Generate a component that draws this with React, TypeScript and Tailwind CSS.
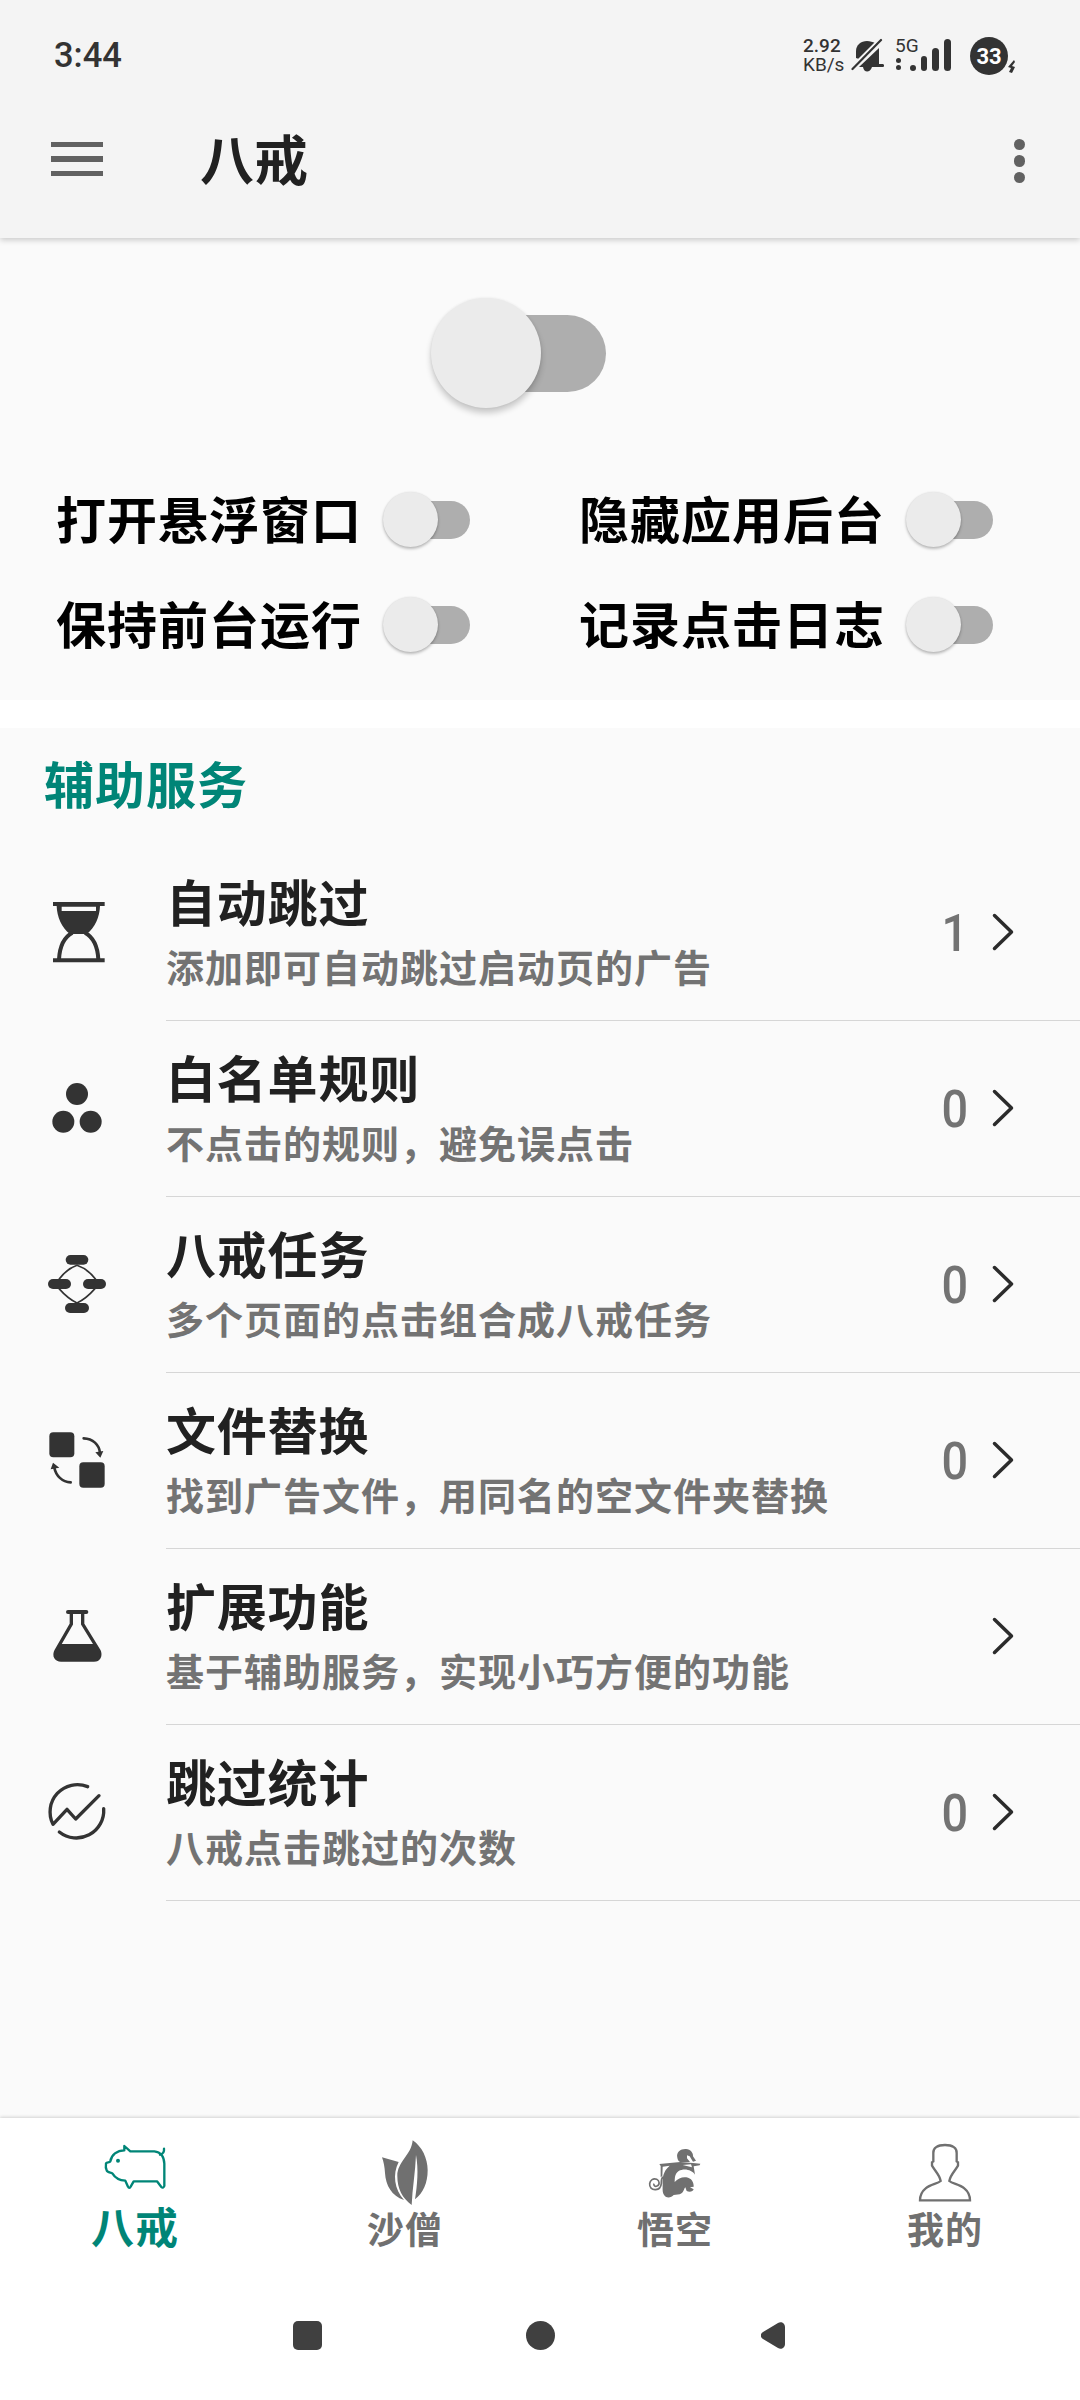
import React, { useState } from 'react';
import clsx from 'clsx';

interface SwitchProps {
  size: 'lg' | 'sm';
  checked: boolean;
  onChange: () => void;
}

const Switch: React.FC<SwitchProps> = ({ size, checked, onChange }) => {
  const large = size === 'lg';

  return (
    <button
      role="switch"
      aria-checked={checked}
      onClick={onChange}
      className={clsx('relative flex items-center', large ? 'w-[175px] h-[110px]' : 'w-[87px] h-[55px]')}
    >
      <span
        className={clsx(
          'ml-auto rounded-full',
          large ? 'w-[155px] h-[77px]' : 'w-[77px] h-[38px]',
          checked ? 'bg-[#80c2bb]' : 'bg-[#aeaeae]'
        )}
      />
      <span
        className={clsx(
          'absolute top-0 rounded-full',
          large
            ? 'size-[110px] shadow-[0_5px_6px_rgba(0,0,0,0.2),0_0_3px_rgba(0,0,0,0.08)]'
            : 'size-[55px] shadow-[0_2px_3px_rgba(0,0,0,0.25),0_0_2px_rgba(0,0,0,0.1)]',
          checked ? 'right-0 bg-[#008577]' : 'left-0 bg-[#ebebeb]'
        )}
      />
    </button>
  );
};

const HourglassIcon = () => (
  <svg viewBox="0 0 192 192" className="size-16" fill="#333">
    <path d="M24 6H179V18H165C164 50 150 84 125 102H75C50 84 36 50 35 18H24ZM50 20V33H153V20Z" fillRule="evenodd" />
    <path d="M42 178C44 140 56 112 82 98M160 178C158 140 146 112 120 98" fill="none" stroke="#333" strokeWidth="12" />
    <path d="M24 174.500H179V187H24Z" />
  </svg>
);

const DotsIcon = () => (
  <svg viewBox="0 0 192 192" className="size-16" fill="#333">
    <circle cx="96" cy="54" r="33" />
    <circle cx="55" cy="137" r="33" />
    <circle cx="137" cy="137" r="33" />
  </svg>
);

const TaskIcon = () => (
  <svg viewBox="0 0 192 192" className="size-16" fill="#333">
    <path
      d="M42 82C58 60 76 47 96 40C116 47 136 60 152 82M42 110C58 128 76 144 96 153C116 144 134 128 150 110"
      fill="none"
      stroke="#333"
      strokeWidth="5"
    />
    <rect x="62" y="9" width="68" height="29" rx="14.500" />
    <rect x="9" y="81" width="69" height="30" rx="15" />
    <rect x="114" y="81" width="69" height="30" rx="15" />
    <rect x="60" y="153" width="72" height="30" rx="15" />
  </svg>
);

const ReplaceIcon = () => (
  <svg viewBox="0 0 192 192" className="size-16" fill="#333">
    <rect x="13" y="13" width="75" height="75" rx="12" />
    <rect x="103" y="103" width="76" height="76" rx="12" />
    <g fill="none" stroke="#333" strokeWidth="8" strokeLinecap="round">
      <path d="M116 31C144 32 162 50 165 74" />
      <path d="M77 163C51 162 33 143 28 119" />
    </g>
    <path d="M151 73L175 69L166 89ZM24 104L17 124L43 119Z" />
  </svg>
);

const FlaskIcon = () => (
  <svg viewBox="0 0 192 192" className="size-16" fill="#333">
    <rect x="63" y="18" width="67" height="12" rx="6" />
    <path
      d="M79 28V60L33 140C25 156 34 168 48 168H147C161 168 169 156 162 140L113 60V28"
      fill="none"
      stroke="#333"
      strokeWidth="10"
    />
    <path d="M44 120H150L164 146C168 162 160 170 147 170H48C34 170 26 162 31 146Z" />
  </svg>
);

const StatsIcon = () => (
  <svg
    viewBox="0 0 192 192"
    className="size-16"
    fill="none"
    stroke="#333"
    strokeWidth="10"
    strokeLinecap="round"
    strokeLinejoin="round"
  >
    <path d="M128 20A82 82 0 0 0 24 133L66 88L92 117L162 47" />
    <path d="M176 86A82 82 0 0 1 43 156" />
  </svg>
);

const PigIcon = () => (
  <svg
    viewBox="0 0 192 192"
    className="size-16"
    fill="none"
    stroke="currentColor"
    strokeWidth="7"
    strokeLinejoin="round"
    strokeLinecap="round"
  >
    <path d="M64 21L82 37H154C172 39 183 51 184 74V141C182 147 178 147 175 144L162 127H92L83 143C81 148 77 148 75 143L67 125C50 124 36 116 28 103C24 100 13 101 11 94C8 88 8 80 9 73C12 68 19 72 22 67C25 48 42 34 64 34Z" />
    <path d="M171 47C180 45 184 38 183 29" />
    <circle cx="45" cy="65" r="6" fill="currentColor" stroke="none" />
  </svg>
);

const LeafIcon = () => (
  <svg viewBox="0 0 192 192" className="size-16 overflow-visible" fill="currentColor">
    <path d="M119 4C147 23 164 58 164 94C164 132 150 163 126 181C133 138 137 92 129 48C127 100 118 150 116 198C88 177 73 150 73 111C73 68 115 49 119 4Z" />
    <path d="M27 55L77 69C58 106 64 150 93 183C56 171 38 139 36 102C35 84 32 68 27 55Z" />
  </svg>
);

const MonkeyIcon = () => (
  <svg viewBox="0 0 192 192" className="size-16" fill="currentColor">
    <path d="M103 56C99 38 114 29 129 30C143 31 151 42 150 52L159 65L150 68L140 52L132 49V58L141 69H112C107 67 104 62 103 56Z" />
    <path d="M49 75L112 69L150 72L172 74L170 79L152 82L156 107C148 93 124 86 107 96C94 106 96 117 95 129C105 118 118 113 130 115C145 117 153 130 152 143L141 145L152 151C150 159 138 160 131 156L127 145C121 151 124 161 110 166L92 168C86 174 77 178 68 173C57 166 59 151 59 136C58 116 60 97 80 80L59 83L58 112L53 114L53 81ZM119 78L147 85L144 76Z" />
    <path
      d="M60 114C54 119 55 127 55 133C54 144 48 151 38 152C26 153 19 145 20 134C21 123 31 117 41 121C50 125 51 138 42 141C36 144 31 139 33 134"
      fill="none"
      stroke="currentColor"
      strokeWidth="5"
    />
  </svg>
);

const PersonIcon = () => (
  <svg viewBox="0 0 192 192" className="size-16" fill="none" stroke="currentColor" strokeWidth="7">
    <path d="M96 18C73 18 60 27 61 42V67L57 70V80C66 96 80 107 83 126C74 134 52 136 38 148C27 157 21 169 21 184H171C171 169 165 157 154 148C140 136 118 134 109 126C112 107 126 96 135 80V70L131 67V42C132 27 119 18 96 18Z" />
  </svg>
);

const services = [
  { title: '自动跳过', desc: '添加即可自动跳过启动页的广告', count: '1', icon: <HourglassIcon /> },
  { title: '白名单规则', desc: '不点击的规则，避免误点击', count: '0', icon: <DotsIcon /> },
  { title: '八戒任务', desc: '多个页面的点击组合成八戒任务', count: '0', icon: <TaskIcon /> },
  { title: '文件替换', desc: '找到广告文件，用同名的空文件夹替换', count: '0', icon: <ReplaceIcon /> },
  { title: '扩展功能', desc: '基于辅助服务，实现小巧方便的功能', icon: <FlaskIcon /> },
  { title: '跳过统计', desc: '八戒点击跳过的次数', count: '0', icon: <StatsIcon /> },
];

const tabs = [
  { label: '八戒', icon: <PigIcon /> },
  { label: '沙僧', icon: <LeafIcon /> },
  { label: '悟空', icon: <MonkeyIcon /> },
  { label: '我的', icon: <PersonIcon /> },
];

const options = ['打开悬浮窗口', '隐藏应用后台', '保持前台运行', '记录点击日志'];

const StatusBar = () => (
  <div className="flex h-[110px] items-start pl-[54px] pr-[64px] text-[#333] font-['Roboto',sans-serif]">
    <span className="mt-[34px] text-[34.500px] leading-[42px] font-medium">3:44</span>
    <div className="ml-auto mt-[36px] flex items-start">
      <div className="w-[48px] text-[19px] leading-[19px] font-medium">
        <div>2.92</div>
        <div className="font-normal">KB/s</div>
      </div>
      <svg viewBox="0 0 33 36" className="mt-[2px] h-9 w-[33px]" fill="#333">
        <path d="M5 20V13C5 7 10 3 16 3C19 3 22 4 24 5L8 21Z" />
        <path d="M28 10V26H32C34 27 33 29 32 29H21C19 35 13 35 12 29H8Z" />
        <path d="M1.500 31L30 2" stroke="#333" strokeWidth="2.200" strokeLinecap="round" />
        <path d="M5 24L26 3" stroke="#f4f4f4" strokeWidth="1.500" />
      </svg>
      <div className="ml-[11px] flex">
        <div className="w-[24px]">
          <div className="text-[19px] leading-[20px]">5G</div>
          <div className="flex flex-col gap-[2px] pt-[2px] pl-px">
            <span className="size-[5px] rounded-full bg-[#333]" />
            <span className="size-[5px] rounded-full bg-[#333]" />
          </div>
        </div>
        <div className="-ml-[9px] flex h-[35px] items-end gap-[5px]">
          <span className="size-[6px] rounded-full bg-[#333]" />
          <span className="h-[15px] w-[6px] rounded-full bg-[#333]" />
          <span className="h-[23px] w-[7px] rounded-full bg-[#333]" />
          <span className="h-[32px] w-[7px] rounded-full bg-[#333]" />
        </div>
      </div>
      <span className="ml-[19px] mt-px flex size-[38px] items-center justify-center rounded-full bg-[#333] text-[22px] font-bold text-white">
        33
      </span>
      <svg viewBox="0 0 8 14" className="mt-[24px] h-[14px] w-2" fill="#333">
        <path d="M6 0L0 7L3 8L1 12L4 13L7 7L4 6L7 2Z" />
      </svg>
    </div>
  </div>
);

export default function App() {
  const [enabled, setEnabled] = useState(false);
  const [checked, setChecked] = useState<string[]>([]);
  const [activeTab, setActiveTab] = useState('八戒');

  const toggle = (name: string) => {
    setChecked((prev) => (prev.includes(name) ? prev.filter((n) => n !== name) : [...prev, name]));
  };

  return (
    <div className="flex h-[2400px] w-[1080px] flex-col overflow-hidden bg-white font-['Noto_Sans_CJK_SC',sans-serif]">
      <header className="z-10 h-[238px] shrink-0 bg-[#f4f4f4] shadow-[0_2px_6px_rgba(0,0,0,0.2)]">
        <StatusBar />
        <div className="flex h-[98px] items-center pl-[51px] pr-[55px]">
          <button className="flex w-[52px] flex-col gap-[9px]" title="菜单">
            <span className="h-[5.500px] bg-[#616161]" />
            <span className="h-[5.500px] bg-[#616161]" />
            <span className="h-[5.500px] bg-[#616161]" />
          </button>
          <h1 className="ml-[97px] -mt-[3px] text-[54px] leading-[60px] font-bold text-[#212121]">八戒</h1>
          <button className="ml-auto mt-[4px] flex flex-col gap-[5px]" title="更多">
            <span className="size-[11.500px] rounded-full bg-[#616161]" />
            <span className="size-[11.500px] rounded-full bg-[#616161]" />
            <span className="size-[11.500px] rounded-full bg-[#616161]" />
          </button>
        </div>
      </header>

      <section className="h-[462px] shrink-0 bg-[#fafafa] pt-[60px]">
        <div className="h-[169px] pl-[431px]">
          <Switch size="lg" checked={enabled} onChange={() => setEnabled(!enabled)} />
        </div>
        <div className="grid grid-cols-[523px_1fr] pl-[56px]">
          {options.map((name) => (
            <div key={name} className="flex h-[105px] items-center">
              <span className="-mt-[6px] w-[327px] whitespace-nowrap text-[50px] leading-[60px] font-bold tracking-[1px] text-black">
                {name}
              </span>
              <Switch size="sm" checked={checked.includes(name)} onChange={() => toggle(name)} />
            </div>
          ))}
        </div>
      </section>

      <main className="mt-[28px] flex-1 bg-[#fafafa] pt-[24px]">
        <h2 className="mb-[33px] pl-[44px] text-[50px] leading-[60px] font-bold tracking-[1px] text-[#008577]">
          辅助服务
        </h2>
        {services.map((item) => (
          <div key={item.title} className="flex h-[176px]">
            <div className="w-[166px] pl-[45px] pt-[55px]">{item.icon}</div>
            <div className="flex flex-1 border-b border-[#d6d6d6]">
              <div className="pt-[25px]">
                <h3 className="text-[50px] leading-[60px] font-bold tracking-[0.800px] text-[#212121]">{item.title}</h3>
                <p className="mt-[11px] text-[38px] leading-[50px] font-bold tracking-[1px] text-[#737373]">
                  {item.desc}
                </p>
              </div>
              <div className="ml-auto flex items-center pr-[65px]">
                <span className="mt-[2px] mr-[21px] origin-center scale-x-90 font-['Roboto',sans-serif] text-[52px] leading-[60px] font-medium text-[#737373]">
                  {item.count}
                </span>
                <svg viewBox="0 0 24 40" className="-mt-[2px] h-10 w-6" fill="none" stroke="#2b2b2b" strokeWidth="3.500">
                  <path d="M3.500 3.500L20.500 20L3.500 36.500" strokeLinecap="round" strokeLinejoin="round" />
                </svg>
              </div>
            </div>
          </div>
        ))}
      </main>

      <footer className="z-10 h-[282px] shrink-0 bg-white shadow-[0_-1px_3px_rgba(0,0,0,0.16)]">
        <nav className="grid h-[170px] grid-cols-4 pt-[21px]">
          {tabs.map((tab) => (
            <button
              key={tab.label}
              onClick={() => setActiveTab(tab.label)}
              className={clsx(
                'flex flex-col items-center font-bold',
                tab.label === activeTab
                  ? 'text-[43px] leading-[44px] tracking-[1px] text-[#008577]'
                  : 'text-[37px] leading-[50px] tracking-[1px] text-[#707070]'
              )}
            >
              {tab.icon}
              <span>{tab.label}</span>
            </button>
          ))}
        </nav>
        <div className="flex h-[95px] items-center pl-[293px]">
          <span className="size-[29px] rounded-[5px] bg-[#404040]" />
          <span className="ml-[204px] size-[29px] rounded-full bg-[#404040]" />
          <svg viewBox="0 0 24 27" className="ml-[206px] h-[27px] w-6" fill="#404040">
            <path d="M2 10L17 1C20 -1 24 1 24 5V22C24 26 20 28 17 26L2 17C-1 15 -1 12 2 10Z" />
          </svg>
        </div>
      </footer>
    </div>
  );
}
